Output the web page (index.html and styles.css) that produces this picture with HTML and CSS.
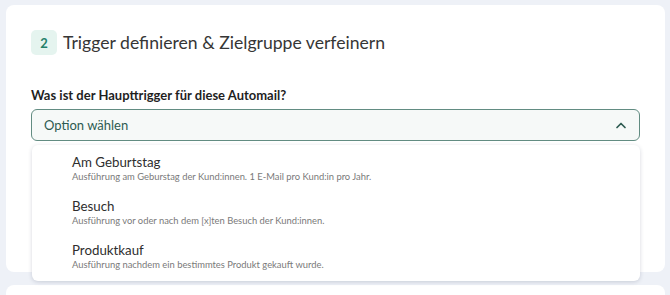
FILE: index.html
```html
<!DOCTYPE html>
<html lang="de">
<head>
    <meta charset="UTF-8">
    <meta name="viewport" content="width=device-width, initial-scale=1.0">
    <title>Automail - Trigger</title>
    <link rel="stylesheet" href="styles.css">
</head>
<body>
    <div class="card">
        <div class="step-header">
            <span class="step-badge">2</span>
            <h2>Trigger definieren &amp; Zielgruppe verfeinern</h2>
        </div>

        <label class="field-label" for="trigger">Was ist der Haupttrigger für diese Automail?</label>
        <div class="select-wrap">
            <div class="select-box" id="trigger">
                <span>Option wählen</span>
                <svg class="chevron" width="12" height="8" viewBox="0 0 12 8">
                    <path d="M2 6.5 L6 2.5 L10 6.5" fill="none" stroke="currentColor" stroke-width="1.7" stroke-linecap="round" stroke-linejoin="round"/>
                </svg>
            </div>

            <ul class="dropdown">
                <li>
                    <div class="opt-title">Am Geburtstag</div>
                    <div class="opt-desc">Ausführung am Geburstag der Kund:innen. 1 E-Mail pro Kund:in pro Jahr.</div>
                </li>
                <li>
                    <div class="opt-title">Besuch</div>
                    <div class="opt-desc">Ausführung vor oder nach dem [x]ten Besuch der Kund:innen.</div>
                </li>
                <li>
                    <div class="opt-title">Produktkauf</div>
                    <div class="opt-desc">Ausführung nachdem ein bestimmtes Produkt gekauft wurde.</div>
                </li>
            </ul>
        </div>
    </div>

    <div class="card next"></div>
</body>
</html>
```

FILE: styles.css
```css
body {
    font-family: Lato, "Noto Sans", sans-serif;
    background-color: #eef1f7;
    margin: 0;
    padding: 5px 5px 0 6px;
    height: 295px;
    box-sizing: border-box;
    overflow: hidden;
}

.card {
    background: #ffffff;
    border-radius: 8px;
    padding: 25px 25px 0 25px;
    height: 242px;
}

.card.next {
    margin-top: 13px;
    height: 10px;
    padding: 0;
    border-radius: 8px 8px 0 0;
}

.step-header {
    display: flex;
    align-items: center;
    gap: 6px;
}

.step-badge {
    width: 26px;
    height: 25px;
    border-radius: 5px;
    background: #e5f4ef;
    color: #24806a;
    font-weight: 700;
    font-size: 13px;
    display: flex;
    align-items: center;
    justify-content: center;
}

h2 {
    margin: 0;
    font-size: 17.6px;
    font-weight: 400;
    color: #363636;
}

.field-label {
    display: block;
    margin-top: 32px;
    font-size: 13px;
    line-height: 17px;
    font-weight: 700;
    color: #1f1f1f;
}

.select-wrap {
    position: relative;
    margin-top: 5px;
    width: 609px;
}

.select-box {
    height: 30px;
    border: 1px solid #628c82;
    border-radius: 6px;
    background: #f6f9f8;
    display: flex;
    align-items: center;
    justify-content: space-between;
    padding: 0 12px 0 12px;
    color: #2d5b51;
    font-size: 13px;
}

.chevron {
    color: #2d5b51;
}

.dropdown {
    position: absolute;
    top: 36px;
    left: 1px;
    right: 0;
    margin: 0;
    padding: 5px 0 0 40px;
    list-style: none;
    background: #ffffff;
    border-radius: 6px;
    box-shadow: 0 1px 4px rgba(30, 40, 70, 0.18);
}

.dropdown li {
    padding: 3px 0 11px 0;
}

.dropdown li:last-child {
    padding-bottom: 10px;
}

.opt-title {
    font-size: 13.3px;
    color: #2e2e2e;
    line-height: 18px;
}

.opt-desc {
    font-size: 9.4px;
    color: #7a7a7a;
    line-height: 12px;
}
```
